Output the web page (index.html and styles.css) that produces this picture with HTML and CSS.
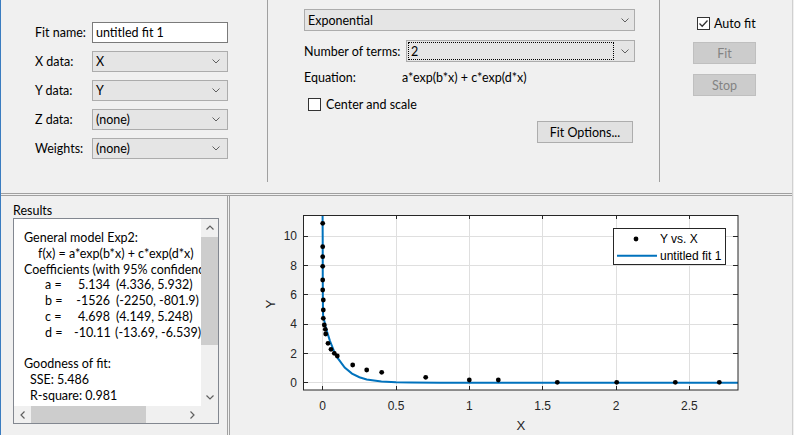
FILE: index.html
```html
<!DOCTYPE html>
<html>
<head>
<meta charset="utf-8">
<title>Curve Fitting</title>
<link rel="stylesheet" href="styles.css">
</head>
<body>
<div class="app">
  <div class="top">
    <div class="group data">
      <div class="form">
        <span class="lbl">Fit name:</span>
        <div class="textbox">untitled fit 1</div>
        <span class="lbl">X data:</span>
        <div class="combo"><span>X</span><svg class="chev" width="8" height="5" viewBox="0 0 8 5"><path d="M0.5 0.5 L4 4 L7.5 0.5"/></svg></div>
        <span class="lbl">Y data:</span>
        <div class="combo"><span>Y</span><svg class="chev" width="8" height="5" viewBox="0 0 8 5"><path d="M0.5 0.5 L4 4 L7.5 0.5"/></svg></div>
        <span class="lbl">Z data:</span>
        <div class="combo"><span>(none)</span><svg class="chev" width="8" height="5" viewBox="0 0 8 5"><path d="M0.5 0.5 L4 4 L7.5 0.5"/></svg></div>
        <span class="lbl">Weights:</span>
        <div class="combo"><span>(none)</span><svg class="chev" width="8" height="5" viewBox="0 0 8 5"><path d="M0.5 0.5 L4 4 L7.5 0.5"/></svg></div>
      </div>
    </div>
    <div class="group model">
      <div class="combo wide"><span>Exponential</span><svg class="chev" width="8" height="5" viewBox="0 0 8 5"><path d="M0.5 0.5 L4 4 L7.5 0.5"/></svg></div>
      <div class="row-terms">
        <span class="terms-lbl">Number of terms:</span>
        <div class="combo terms"><span class="focus">2</span><svg class="chev" width="8" height="5" viewBox="0 0 8 5"><path d="M0.5 0.5 L4 4 L7.5 0.5"/></svg></div>
      </div>
      <div class="row-eq">
        <span class="eq-lbl">Equation:</span>
        <span>a*exp(b*x) + c*exp(d*x)</span>
      </div>
      <div class="row-check">
        <span class="checkbox"></span>
        <span>Center and scale</span>
      </div>
      <div class="row-btn">
        <div class="button options">Fit Options...</div>
      </div>
    </div>
    <div class="group fit">
      <div class="row-auto">
        <span class="checkbox"><svg width="11" height="11" viewBox="0 0 11 11"><path d="M1.5 5.5 L4.2 8.2 L9.5 2.5"/></svg></span>
        <span>Auto fit</span>
      </div>
      <div class="button disabled fitbtn">Fit</div>
      <div class="button disabled stopbtn">Stop</div>
    </div>
  </div>
  <div class="hsplit"></div>
  <div class="bottom">
    <div class="results">
      <div class="res-title">Results</div>
      <div class="res-box">
        <div class="res-text">
          <div>General model Exp2:</div>
          <div class="ind1">f(x) = a*exp(b*x) + c*exp(d*x)</div>
          <div>Coefficients (with 95% confidence bounds):</div>
          <div class="coef"><span class="cn">a =</span><span class="cv">5.134</span><span class="ci">(4.336, 5.932)</span></div>
          <div class="coef"><span class="cn">b =</span><span class="cv">-1526</span><span class="ci">(-2250, -801.9)</span></div>
          <div class="coef"><span class="cn">c =</span><span class="cv">4.698</span><span class="ci">(4.149, 5.248)</span></div>
          <div class="coef"><span class="cn">d =</span><span class="cv">-10.11</span><span class="ci">(-13.69, -6.539)</span></div>
          <div class="blank"></div>
          <div>Goodness of fit:</div>
          <div class="ind2">SSE: 5.486</div>
          <div class="ind2">R-square: 0.981</div>
        </div>
        <div class="vscroll">
          <div class="sbtn"><svg class="schev" width="8" height="5" viewBox="0 0 8 5"><path d="M0.5 4.5 L4 1 L7.5 4.5"/></svg></div>
          <div class="vthumb"></div>
          <div class="sfill"></div>
          <div class="sbtn"><svg class="schev" width="8" height="5" viewBox="0 0 8 5"><path d="M0.5 0.5 L4 4 L7.5 0.5"/></svg></div>
        </div>
        <div class="hscroll">
          <div class="sbtn"><svg class="schev" width="5" height="8" viewBox="0 0 5 8"><path d="M4.5 0.5 L1 4 L4.5 7.5"/></svg></div>
          <div class="hthumb"></div>
          <div class="sfill"></div>
          <div class="sbtn"><svg class="schev" width="5" height="8" viewBox="0 0 5 8"><path d="M0.5 0.5 L4 4 L0.5 7.5"/></svg></div>
        </div>
        <div class="corner"></div>
      </div>
    </div>
    <div class="vsplit"></div>
    <div class="plot">
      <svg class="chart" width="562" height="239" viewBox="230 196 562 239">
        <defs>
          <clipPath id="axclip"><rect x="303" y="215" width="436" height="176"/></clipPath>
        </defs>
        <rect x="303" y="215" width="435" height="175" fill="#ffffff"/>
        <g class="grid">
          <line x1="322.5" y1="215" x2="322.5" y2="390"/>
          <line x1="396.5" y1="215" x2="396.5" y2="390"/>
          <line x1="469.5" y1="215" x2="469.5" y2="390"/>
          <line x1="542.5" y1="215" x2="542.5" y2="390"/>
          <line x1="616.5" y1="215" x2="616.5" y2="390"/>
          <line x1="689.5" y1="215" x2="689.5" y2="390"/>
          <line x1="303" y1="382.5" x2="738" y2="382.5"/>
          <line x1="303" y1="353.5" x2="738" y2="353.5"/>
          <line x1="303" y1="324.5" x2="738" y2="324.5"/>
          <line x1="303" y1="294.5" x2="738" y2="294.5"/>
          <line x1="303" y1="265.5" x2="738" y2="265.5"/>
          <line x1="303" y1="236.5" x2="738" y2="236.5"/>
        </g>
        <g class="ticks">
          <line x1="303" y1="382.5" x2="308" y2="382.5"/>
          <line x1="303" y1="353.5" x2="308" y2="353.5"/>
          <line x1="303" y1="324.5" x2="308" y2="324.5"/>
          <line x1="303" y1="294.5" x2="308" y2="294.5"/>
          <line x1="303" y1="265.5" x2="308" y2="265.5"/>
          <line x1="303" y1="236.5" x2="308" y2="236.5"/>
          <line x1="738" y1="382.5" x2="733" y2="382.5"/>
          <line x1="738" y1="353.5" x2="733" y2="353.5"/>
          <line x1="738" y1="324.5" x2="733" y2="324.5"/>
          <line x1="738" y1="294.5" x2="733" y2="294.5"/>
          <line x1="738" y1="265.5" x2="733" y2="265.5"/>
          <line x1="738" y1="236.5" x2="733" y2="236.5"/>
          <line x1="322.5" y1="390" x2="322.5" y2="386"/>
          <line x1="396.5" y1="390" x2="396.5" y2="386"/>
          <line x1="469.5" y1="390" x2="469.5" y2="386"/>
          <line x1="542.5" y1="390" x2="542.5" y2="386"/>
          <line x1="616.5" y1="390" x2="616.5" y2="386"/>
          <line x1="689.5" y1="390" x2="689.5" y2="386"/>
          <line x1="322.5" y1="215" x2="322.5" y2="219"/>
          <line x1="396.5" y1="215" x2="396.5" y2="219"/>
          <line x1="469.5" y1="215" x2="469.5" y2="219"/>
          <line x1="542.5" y1="215" x2="542.5" y2="219"/>
          <line x1="616.5" y1="215" x2="616.5" y2="219"/>
          <line x1="689.5" y1="215" x2="689.5" y2="219"/>
        </g>
        <path class="curve" clip-path="url(#axclip)" d="M322.55 205 L322.62 224 L322.7 238.5 L322.73 258.4 L322.77 279 L322.85 298 L323.0 311.5 L323.1 315.1 L323.4 317.1 L324.2 320.4 L325.6 326.4 L327.1 331.8 L330.0 341.1 L333.7 350.4 L337.4 357.6 L344.7 367.6 L352.0 373.6 L359.4 377.2 L366.7 379.4 L381.4 381.5 L396.0 382.26 L410.7 382.54 L440.1 382.68 L469.4 382.7 L738 382.7"/>
        <g class="dots">
          <circle cx="322.7" cy="223.3" r="2.4"/>
          <circle cx="322.7" cy="246.7" r="2.4"/>
          <circle cx="322.7" cy="256.7" r="2.4"/>
          <circle cx="322.7" cy="266.3" r="2.4"/>
          <circle cx="322.7" cy="280" r="2.4"/>
          <circle cx="322.7" cy="290" r="2.4"/>
          <circle cx="323.3" cy="300" r="2.4"/>
          <circle cx="323.3" cy="310" r="2.4"/>
          <circle cx="323.3" cy="318.3" r="2.4"/>
          <circle cx="324.3" cy="325" r="2.4"/>
          <circle cx="325.3" cy="329.3" r="2.4"/>
          <circle cx="325.7" cy="334" r="2.4"/>
          <circle cx="328" cy="343.3" r="2.4"/>
          <circle cx="331" cy="349.3" r="2.4"/>
          <circle cx="334.3" cy="353.3" r="2.4"/>
          <circle cx="337.3" cy="356" r="2.4"/>
          <circle cx="352.7" cy="365" r="2.4"/>
          <circle cx="366.7" cy="370" r="2.4"/>
          <circle cx="381.7" cy="372.3" r="2.4"/>
          <circle cx="425.7" cy="377.3" r="2.4"/>
          <circle cx="469.3" cy="380" r="2.4"/>
          <circle cx="498.3" cy="380" r="2.4"/>
          <circle cx="557.3" cy="382.3" r="2.4"/>
          <circle cx="616.7" cy="382.3" r="2.4"/>
          <circle cx="675.3" cy="382.3" r="2.4"/>
          <circle cx="719.3" cy="382.3" r="2.4"/>
        </g>
        <rect class="axbox" x="303.5" y="215.5" width="434.5" height="174.5"/>
        <g class="ticklbl">
          <text x="297" y="240.3" text-anchor="end">10</text>
          <text x="297" y="269.6" text-anchor="end">8</text>
          <text x="297" y="299" text-anchor="end">6</text>
          <text x="297" y="328.3" text-anchor="end">4</text>
          <text x="297" y="357.6" text-anchor="end">2</text>
          <text x="297" y="387" text-anchor="end">0</text>
          <text x="322.7" y="410" text-anchor="middle">0</text>
          <text x="396" y="410" text-anchor="middle">0.5</text>
          <text x="469.3" y="410" text-anchor="middle">1</text>
          <text x="542.7" y="410" text-anchor="middle">1.5</text>
          <text x="616" y="410" text-anchor="middle">2</text>
          <text x="689.3" y="410" text-anchor="middle">2.5</text>
        </g>
        <text class="axlbl" x="521" y="429.7" text-anchor="middle">X</text>
        <text class="axlbl" x="274.7" y="304" text-anchor="middle" transform="rotate(-90 274.7 304)">Y</text>
        <g class="legend">
          <rect x="613.5" y="228.5" width="112" height="36"/>
          <circle cx="636" cy="239" r="2.4" class="ldot"/>
          <text x="660" y="243.3">Y vs. X</text>
          <line x1="617" y1="255.7" x2="657" y2="255.7" class="lline"/>
          <text x="660" y="260">untitled fit 1</text>
        </g>
      </svg>
    </div>
  </div>
</div>
</body>
</html>
```

FILE: styles.css
```css
* { box-sizing: border-box; }

body {
  margin: 0;
  background: #f0f0f0;
  font-family: Lato, "Noto Sans", sans-serif;
  font-size: 12.5px;
  color: #000;
  overflow: hidden;
}

.app {
  width: 793px;
  height: 435px;
  display: flex;
  flex-direction: column;
  border-left: 1px solid #3a7cc0;
  border-right: 1px solid #d0d0d0;
}

.top {
  height: 193px;
  display: flex;
}

.group {
  height: 182px;
}

.data {
  width: 267px;
  border-right: 1px solid #a0a0a0;
  padding: 22px 0 0 34px;
}

.form {
  display: grid;
  grid-template-columns: 57px 136px;
  grid-auto-rows: 21px;
  row-gap: 8px;
  align-items: center;
}

.lbl {
  line-height: 16px;
}

.textbox {
  height: 21px;
  border: 1px solid #7a7a7a;
  background: #ffffff;
  padding-left: 3px;
  display: flex;
  align-items: center;
}

.combo {
  height: 21px;
  border: 1px solid #acacac;
  background: #e5e5e5;
  padding: 0 7px 0 3px;
  display: flex;
  align-items: center;
  justify-content: space-between;
}

.chev {
  display: block;
  fill: none;
  stroke: #606060;
  stroke-width: 1;
}

.model {
  width: 392px;
  border-right: 1px solid #a0a0a0;
  padding: 9px 0 0 36px;
}

.combo.wide {
  width: 331px;
  height: 22px;
  padding-right: 5px;
}

.row-terms {
  margin-top: 9px;
  height: 22px;
  display: flex;
  align-items: center;
}

.terms-lbl {
  width: 102px;
}

.combo.terms {
  width: 229px;
  height: 22px;
  padding: 1px 5px 1px 1px;
  align-items: stretch;
}

.focus {
  width: 206px;
  border: 1px dotted #000;
  padding-left: 2px;
  display: flex;
  align-items: center;
}

.combo.terms .chev {
  align-self: center;
}

.row-eq {
  margin-top: 7px;
  height: 16px;
  display: flex;
  align-items: center;
}

.eq-lbl {
  width: 98px;
}

.row-check {
  margin-top: 11px;
  height: 16px;
  display: flex;
  align-items: center;
  gap: 5px;
  padding-left: 4px;
}

.checkbox {
  width: 13px;
  height: 13px;
  border: 1px solid #333333;
  background: #ffffff;
  display: flex;
  align-items: center;
  justify-content: center;
}

.checkbox svg {
  display: block;
  fill: none;
  stroke: #333333;
  stroke-width: 1.3;
}

.row-btn {
  margin-top: 9px;
  padding-left: 233px;
}

.button {
  height: 22px;
  border: 1px solid #adadad;
  background: #e1e1e1;
  display: flex;
  align-items: center;
  justify-content: center;
}

.options {
  width: 96px;
}

.fit {
  flex: 1;
  padding: 17px 0 0 33px;
}

.row-auto {
  height: 13px;
  display: flex;
  align-items: center;
  gap: 4px;
  padding-left: 4px;
}

.button.disabled {
  width: 63px;
  background: #cccccc;
  border-color: #bfbfbf;
  color: #838383;
}

.fitbtn {
  margin-top: 12px;
}

.stopbtn {
  margin-top: 10px;
}

.hsplit {
  height: 3px;
  border-top: 1px solid #a0a0a0;
  border-bottom: 1px solid #a0a0a0;
}

.bottom {
  flex: 1;
  display: flex;
}

.results {
  width: 226px;
  padding: 7px 0 0 12px;
}

.res-title {
  height: 15px;
  line-height: 15px;
}

.res-box {
  width: 206px;
  height: 206px;
  border: 1px solid #828790;
  background: #ffffff;
  display: grid;
  grid-template-columns: 187px 17px;
  grid-template-rows: 187px 17px;
}

.res-text {
  overflow: hidden;
  white-space: nowrap;
  padding: 11px 0 0 10px;
  line-height: 15.8px;
}

.ind1 { padding-left: 14px; }
.ind2 { padding-left: 6px; }
.blank { height: 15.8px; }

.coef {
  display: flex;
  padding-left: 21px;
}

.cn { width: 30px; }
.cv { width: 35px; text-align: right; }
.ci { margin-left: 6px; }

.vscroll {
  background: #f0f0f0;
  display: flex;
  flex-direction: column;
}

.hscroll {
  background: #f0f0f0;
  display: flex;
}

.corner {
  background: #f0f0f0;
}

.sbtn {
  width: 17px;
  height: 17px;
  flex: none;
  display: flex;
  align-items: center;
  justify-content: center;
}

.schev {
  display: block;
  fill: none;
  stroke: #606060;
  stroke-width: 1.2;
}

.vthumb {
  margin-top: 1px;
  height: 108px;
  background: #cdcdcd;
  flex: none;
}

.hthumb {
  width: 115px;
  background: #cdcdcd;
  flex: none;
}

.sfill { flex: 1; }

.vsplit {
  width: 3px;
  border-left: 1px solid #a0a0a0;
  border-right: 1px solid #a0a0a0;
}

.plot {
  flex: 1;
}

.chart {
  display: block;
  font-family: "Liberation Sans", Arial, sans-serif;
}

.grid line {
  stroke: #dfdfdf;
  stroke-width: 1;
}

.ticks line {
  stroke: #262626;
  stroke-width: 1;
}

.axbox {
  fill: none;
  stroke: #262626;
  stroke-width: 1;
}

.curve {
  fill: none;
  stroke: #0072bd;
  stroke-width: 2;
}

.dots circle {
  fill: #000000;
}

.ticklbl text {
  font-size: 12px;
  fill: #262626;
}

.axlbl {
  font-size: 13.2px;
  fill: #262626;
}

.legend rect {
  fill: #ffffff;
  stroke: #262626;
  stroke-width: 1;
}

.legend text {
  font-size: 12px;
  fill: #000000;
}

.ldot {
  fill: #000000;
}

.lline {
  stroke: #0072bd;
  stroke-width: 2;
}
```
